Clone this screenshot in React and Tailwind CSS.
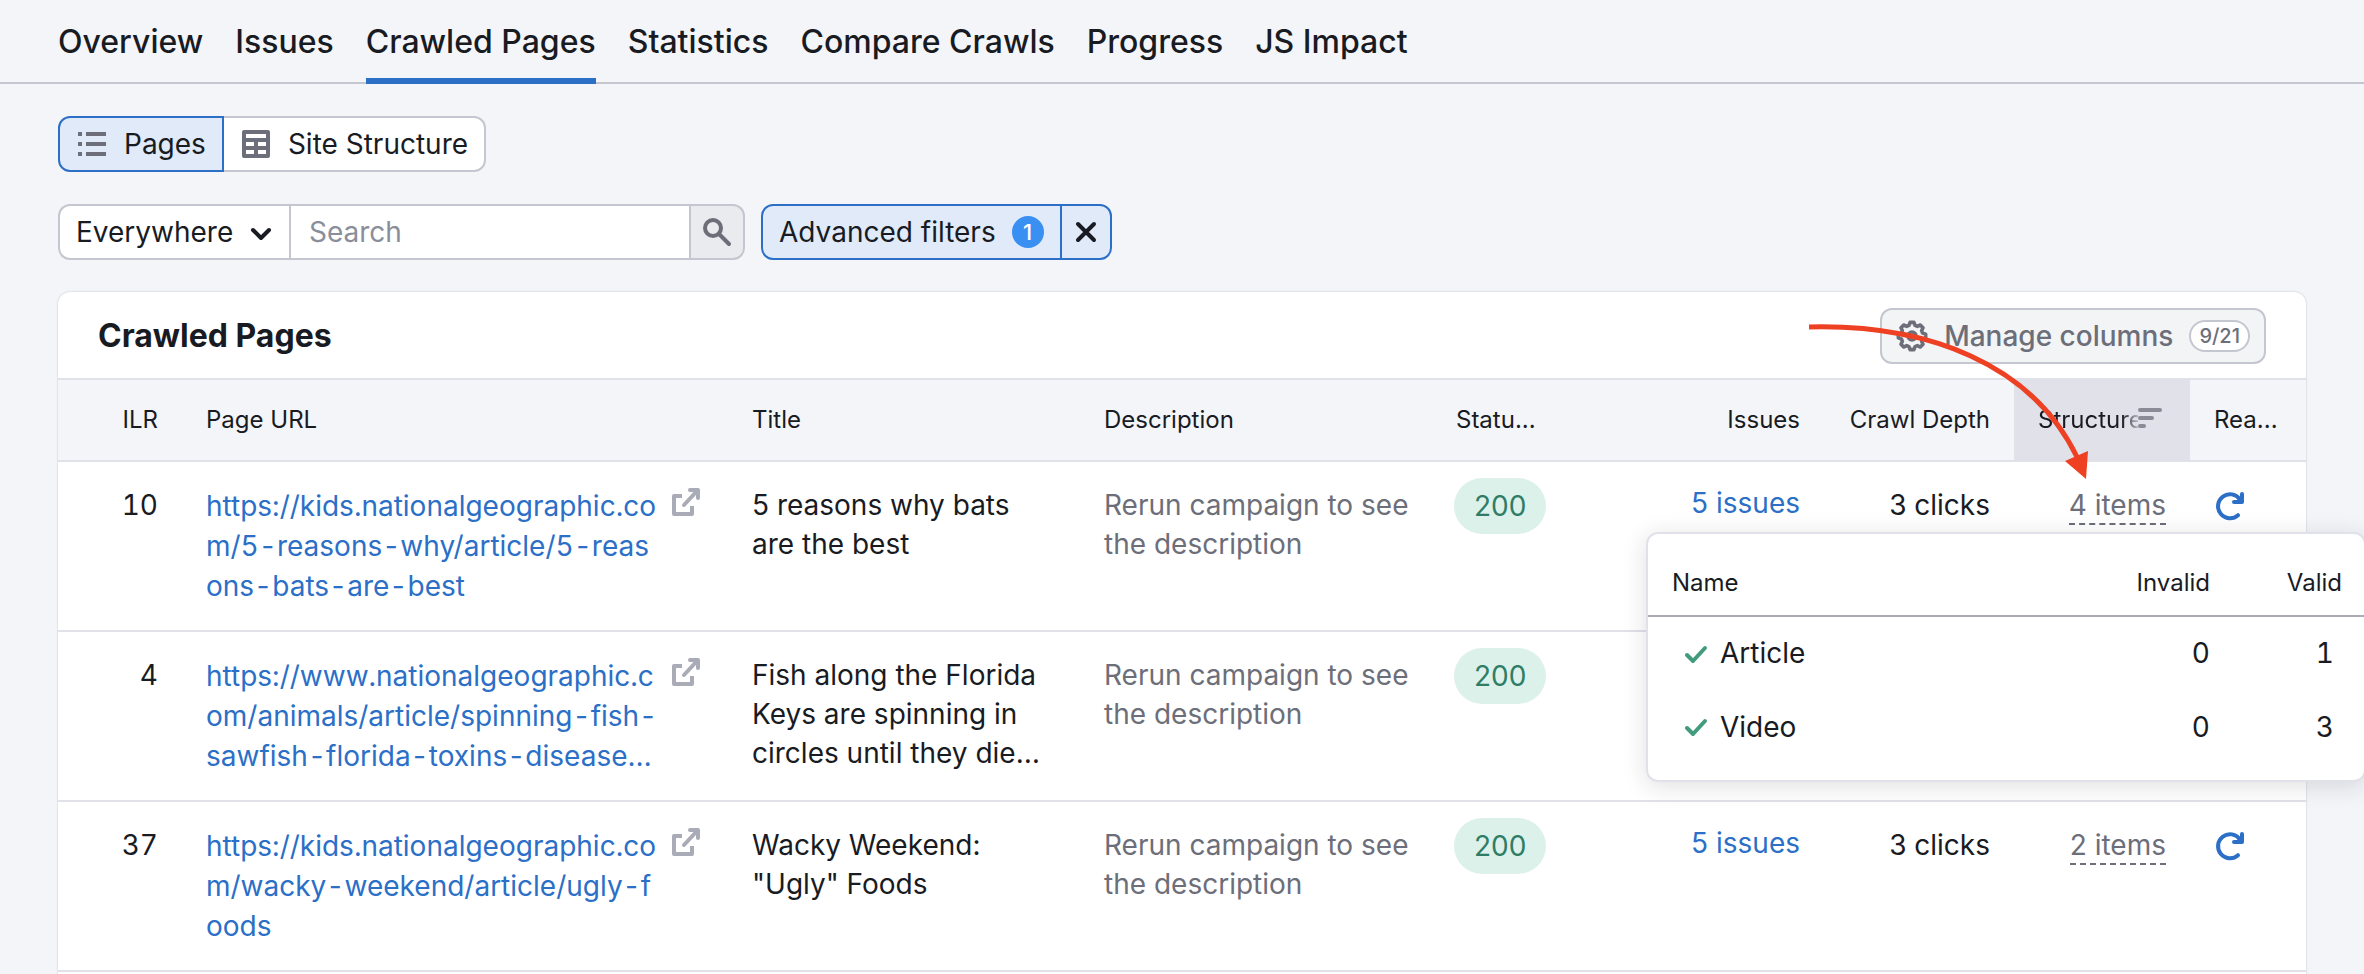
import { useState } from "react";

const TABS = ["Overview", "Issues", "Crawled Pages", "Statistics", "Compare Crawls", "Progress", "JS Impact"];

const ROWS = [
  {
    ilr: 10,
    url: "https://kids.nationalgeographic.com/5-reasons-why/article/5-reasons-bats-are-best",
    title: "5 reasons why bats are the best",
    issues: "5 issues",
    depth: "3 clicks",
    items: "4 items",
  },
  {
    ilr: 4,
    url: "https://www.nationalgeographic.com/animals/article/spinning-fish-sawfish-florida-toxins-disease…",
    title: "Fish along the Florida Keys are spinning in circles until they die…",
  },
  {
    ilr: 37,
    url: "https://kids.nationalgeographic.com/wacky-weekend/article/ugly-foods",
    title: 'Wacky Weekend: "Ugly" Foods',
    issues: "5 issues",
    depth: "3 clicks",
    items: "2 items",
  },
];

const SCHEMAS = [
  { name: "Article", invalid: 0, valid: 1 },
  { name: "Video", invalid: 0, valid: 3 },
];

function ListIcon() {
  return (
    <svg className="h-8 w-8 shrink-0 text-[#6c6e79]" viewBox="0 0 32 32" fill="currentColor" aria-hidden="true">
      <path d="M2 4h4v4H2zM10 4h20v4H10zM2 14h4v4H2zM10 14h20v4H10zM2 24h4v4H2zM10 24h20v4H10z" />
    </svg>
  );
}

function GridIcon() {
  return (
    <svg className="h-8 w-8 shrink-0 text-[#6c6e79]" viewBox="0 0 32 32" fill="currentColor" fillRule="evenodd" aria-hidden="true">
      <path d="M4 2h24a2 2 0 0 1 2 2v24a2 2 0 0 1-2 2H4a2 2 0 0 1-2-2V4a2 2 0 0 1 2-2zM6 6v4h20V6zM6 14v4h8v-4zM18 14v4h8v-4zM6 22v4h8v-4zM18 22v4h8v-4z" />
    </svg>
  );
}

function ChevronIcon() {
  return (
    <svg className="pointer-events-none col-start-2 row-start-1 h-6 w-6" viewBox="0 0 24 24" fill="none" stroke="currentColor" strokeWidth="4" strokeLinecap="round" strokeLinejoin="round" aria-hidden="true">
      <path d="M4 10l8 8 8-8" />
    </svg>
  );
}

function SearchIcon() {
  return (
    <svg className="h-8 w-8 text-[#6c6e79]" viewBox="0 0 32 32" fill="none" stroke="currentColor" strokeWidth="4" strokeLinecap="round" aria-hidden="true">
      <circle cx="12" cy="12" r="8" />
      <path d="M18 18l10 10" />
    </svg>
  );
}

function CloseIcon() {
  return (
    <svg className="h-6 w-6" viewBox="0 0 24 24" fill="none" stroke="currentColor" strokeWidth="4" strokeLinecap="round" aria-hidden="true">
      <path d="M4 4l16 16M20 4L4 20" />
    </svg>
  );
}

// Eight-toothed cog outline: each tooth is two outer points followed by two valley points.
const COG_PATH =
  Array.from({ length: 8 }, (_, i) =>
    [
      [-8, 13.8],
      [8, 13.8],
      [16, 11],
      [29, 11],
    ].map(([deg, r]) => {
      const a = ((i * 45 + deg - 90) * Math.PI) / 180;
      return (16 + r * Math.cos(a)).toFixed(2) + " " + (16 + r * Math.sin(a)).toFixed(2);
    })
  )
    .flat()
    .reduce((d, p) => (d ? d + "L" + p : "M" + p), "") + "Z";

function GearIcon() {
  return (
    <svg className="h-8 w-8 shrink-0" viewBox="0 0 32 32" fill="none" stroke="currentColor" strokeWidth="3.600" strokeLinejoin="round" aria-hidden="true">
      <path d={COG_PATH} />
      <circle cx="16" cy="16" r="4" />
    </svg>
  );
}

function ExternalIcon() {
  return (
    <svg className="h-8 w-8" viewBox="0 0 32 32" fill="none" stroke="currentColor" strokeWidth="4" strokeLinejoin="round" strokeLinecap="round" aria-hidden="true">
      <path d="M12 10H4v18h18v-8" strokeLinecap="butt" />
      <path d="M14 19L27 5M20 4h8v8" />
    </svg>
  );
}

function RefreshIcon() {
  return (
    <svg className="h-8 w-8" viewBox="0 0 32 32" fill="none" stroke="currentColor" strokeWidth="4" strokeLinecap="round" strokeLinejoin="round" aria-hidden="true">
      <path d="M24 25.200A12 12 0 1 1 26 9.500" />
      <path d="M28 4v8h-8" />
      <path d="M28 5v7h-7z" fill="currentColor" stroke="none" />
    </svg>
  );
}

function SortIcon() {
  return (
    <svg className="h-6 w-6 shrink-0 text-[#8a8b96]" viewBox="0 0 24 24" fill="none" stroke="currentColor" strokeWidth="4" strokeLinecap="round" aria-hidden="true">
      <path d="M2 2h20M2 10h12M2 18h4" />
    </svg>
  );
}

function CheckIcon() {
  return (
    <svg className="h-6 w-6 text-[#429b7f]" viewBox="0 0 24 24" fill="none" stroke="currentColor" strokeWidth="4" strokeLinecap="round" strokeLinejoin="round" aria-hidden="true">
      <path d="M3 13l6 6L21 6" />
    </svg>
  );
}

function Toolbar() {
  const [query, setQuery] = useState("");
  return (
    <div className="flex flex-wrap items-center gap-4">
      <form className="flex h-14 text-[28px]" onSubmit={(e) => e.preventDefault()}>
        <div className="grid grid-cols-[1fr_auto_16px] items-center rounded-l-xl border-2 border-r-0 border-[#c4c7cf] bg-white">
          <select aria-label="Search scope" className="col-span-3 col-start-1 row-start-1 h-full w-[229px] appearance-none rounded-l-xl pl-4">
            <option>Everywhere</option>
            <option>Page URL</option>
            <option>Title</option>
          </select>
          <ChevronIcon />
        </div>
        <input
          type="search"
          aria-label="Search"
          placeholder="Search"
          value={query}
          onChange={(e) => setQuery(e.target.value)}
          className="w-[400px] border-y-2 border-l-2 border-[#c4c7cf] bg-white px-[18px] placeholder:text-[#8a8e9b]"
        />
        <button type="submit" aria-label="Run search" className="flex w-14 items-center justify-center rounded-r-xl border-2 border-[#c4c7cf] bg-[#e9ebef]">
          <SearchIcon />
        </button>
      </form>
      <div className="flex h-14 rounded-xl border-2 border-[#2b6fc7] bg-[#e0eaf9] text-[28px]">
        <button type="button" className="flex items-center gap-4 px-4">
          Advanced filters
          <span className="flex h-8 w-8 items-center justify-center rounded-full bg-[#3a8ff2] text-[22px] leading-8 font-medium text-white">1</span>
        </button>
        <button type="button" aria-label="Clear filters" className="flex w-[50px] items-center justify-center border-l-2 border-[#2b6fc7]">
          <CloseIcon />
        </button>
      </div>
    </div>
  );
}

function StructuredDataPopover() {
  return (
    <div role="dialog" aria-label="Structured data" className="absolute top-[46px] -right-[200px] z-10 w-[720px] rounded-xl border-2 border-[#e0e1e9] bg-white py-4 text-left shadow-[0_4px_24px_rgba(25,27,35,0.14)]">
      <table className="w-full">
        <thead>
          <tr className="h-[66px] border-b-2 border-[#a9abb6] text-2xl">
            <th className="pl-6 text-left font-normal">Name</th>
            <th className="w-[160px] pr-6 text-right font-normal">Invalid</th>
            <th className="w-[130px] pr-[22px] text-right font-normal">Valid</th>
          </tr>
        </thead>
        <tbody>
          {SCHEMAS.map((s) => (
            <tr key={s.name} className="h-[74px]">
              <td className="pl-9">
                <span className="flex items-center gap-3">
                  <CheckIcon />
                  {s.name}
                </span>
              </td>
              <td className="pr-6 text-right tabular-nums">{s.invalid}</td>
              <td className="pr-[30px] text-right tabular-nums">{s.valid}</td>
            </tr>
          ))}
        </tbody>
      </table>
    </div>
  );
}

function CrawlTable() {
  return (
    <table className="w-full table-fixed text-[28px] leading-[39px]">
      <colgroup>
        <col className="w-[124px]" />
        <col />
        <col className="w-[352px]" />
        <col className="w-[352px]" />
        <col className="w-[176px]" />
        <col className="w-[216px]" />
        <col className="w-[190px]" />
        <col className="w-[176px]" />
        <col className="w-[116px]" />
      </colgroup>
      <thead>
        <tr className="h-[82px] border-y-2 border-[#e0e1e9] bg-[#f4f5f9] text-2xl">
          <th className="pr-6 text-right font-normal">ILR</th>
          <th className="pl-6 text-left font-normal">Page URL</th>
          <th className="pl-6 text-left font-normal">Title</th>
          <th className="pl-6 text-left font-normal">Description</th>
          <th className="pl-6 text-left font-normal">Statu...</th>
          <th className="pr-6 text-right font-normal">Issues</th>
          <th className="pr-6 text-right font-normal">Crawl Depth</th>
          <th aria-sort="descending" className="bg-[#e0e1e9] pl-6 text-left font-normal">
            <button type="button" className="flex w-full items-center pr-7">
              <span className="min-w-0 flex-1 bg-linear-to-r from-[#191b23] from-84% to-[#191b23]/20 bg-clip-text text-left whitespace-nowrap text-transparent">Structure</span>
              <SortIcon />
            </button>
          </th>
          <th className="pl-6 text-left font-normal">Rea...</th>
        </tr>
      </thead>
      <tbody>
        {ROWS.map((row, i) => (
          <tr key={row.ilr} className="h-[170px] border-b-2 border-[#e0e1e9] align-top">
            <td className="pt-6 pr-6 text-right tabular-nums">{row.ilr}</td>
            <td className="pt-6 pl-6">
              <div className="flex items-start gap-3">
                <a href={row.url} className="w-[452px] shrink-0 leading-10 break-all text-[#2b6fc7] tabular-nums">{row.url}</a>
                <a href={row.url} aria-label="Open page" className="text-[#a9abb6]">
                  <ExternalIcon />
                </a>
              </div>
            </td>
            <td className="pt-6 pr-6 pl-6">{row.title}</td>
            <td className="pt-6 pr-4 pl-6 text-[#6c6e79]">Rerun campaign to see the description</td>
            <td className="pt-4 pl-[22px]">
              <span className="inline-block rounded-full bg-[#dbf1ea] px-5 leading-[56px] text-[#2f7d66]">200</span>
            </td>
            <td className="pt-[22px] pr-6 text-right">
              {row.issues && <a href="#issues" className="text-[#2b6fc7]">{row.issues}</a>}
            </td>
            <td className="pt-6 pr-6 text-right">{row.depth}</td>
            <td className="pt-6 pr-6 text-right">
              {row.items && (
                <div className="relative">
                  <button type="button" className="border-b-2 border-dashed border-[#6c6e79] leading-9 text-[#6c6e79]">{row.items}</button>
                  {i === 0 && <StructuredDataPopover />}
                </div>
              )}
            </td>
            <td className="pt-7 pl-6">
              <button type="button" aria-label="Recrawl page" className="block text-[#2b6fc7]">
                <RefreshIcon />
              </button>
            </td>
          </tr>
        ))}
      </tbody>
    </table>
  );
}

function PointerArrow() {
  return (
    <svg className="pointer-events-none absolute top-8 right-[216px] z-20 h-[156px] w-[282px]" viewBox="0 0 282 156" fill="none" aria-hidden="true">
      <path d="M1 3C120 0 224 40 269 133" stroke="#ee4023" strokeWidth="5" />
      <path d="M257 137L280 127L278 155z" fill="#ee4023" />
    </svg>
  );
}

export default function App() {
  return (
    <div className="h-screen overflow-hidden bg-[#f4f5f9] font-['Inter',sans-serif] text-[#191b23]">
      <nav className="flex gap-8 border-b-2 border-[#c4c7cf] px-[58px] text-[32px] leading-[48px] font-medium">
        {TABS.map((tab) =>
          tab === "Crawled Pages" ? (
            <a key={tab} href="#tab" aria-current="page" className="-mb-0.5 border-b-6 border-[#2b6fc7] pt-[18px] pb-3">{tab}</a>
          ) : (
            <a key={tab} href="#tab" className="pt-[18px] pb-4">{tab}</a>
          )
        )}
      </nav>
      <main className="px-[58px] pt-8">
        <div className="mb-8 flex h-14 text-[28px]">
          <button type="button" aria-pressed="true" className="flex items-center gap-4 rounded-l-xl border-2 border-[#2b6fc7] bg-[#e0eaf9] px-4">
            <ListIcon />
            Pages
          </button>
          <button type="button" aria-pressed="false" className="flex items-center gap-4 rounded-r-xl border-2 border-l-0 border-[#c4c7cf] bg-white px-4">
            <GridIcon />
            Site Structure
          </button>
        </div>
        <Toolbar />
        <section className="relative mt-8 rounded-xl bg-white pb-10 shadow-[0_0_2px_rgba(25,27,35,0.25)]">
          <header className="flex h-[86px] items-center justify-between px-10 pt-0.5">
            <h2 className="text-[32px] font-bold">Crawled Pages</h2>
            <button type="button" className="flex h-14 items-center gap-4 rounded-xl border-2 border-[#c4c7cf] bg-[#f3f4f6] px-[14px] text-[28px] font-medium text-[#6c6e79]">
              <GearIcon />
              Manage columns
              <span className="rounded-full border-2 border-[#c4c7cf] bg-white px-2 text-[20px] leading-7">9/21</span>
            </button>
          </header>
          <CrawlTable />
          <PointerArrow />
        </section>
      </main>
    </div>
  );
}
